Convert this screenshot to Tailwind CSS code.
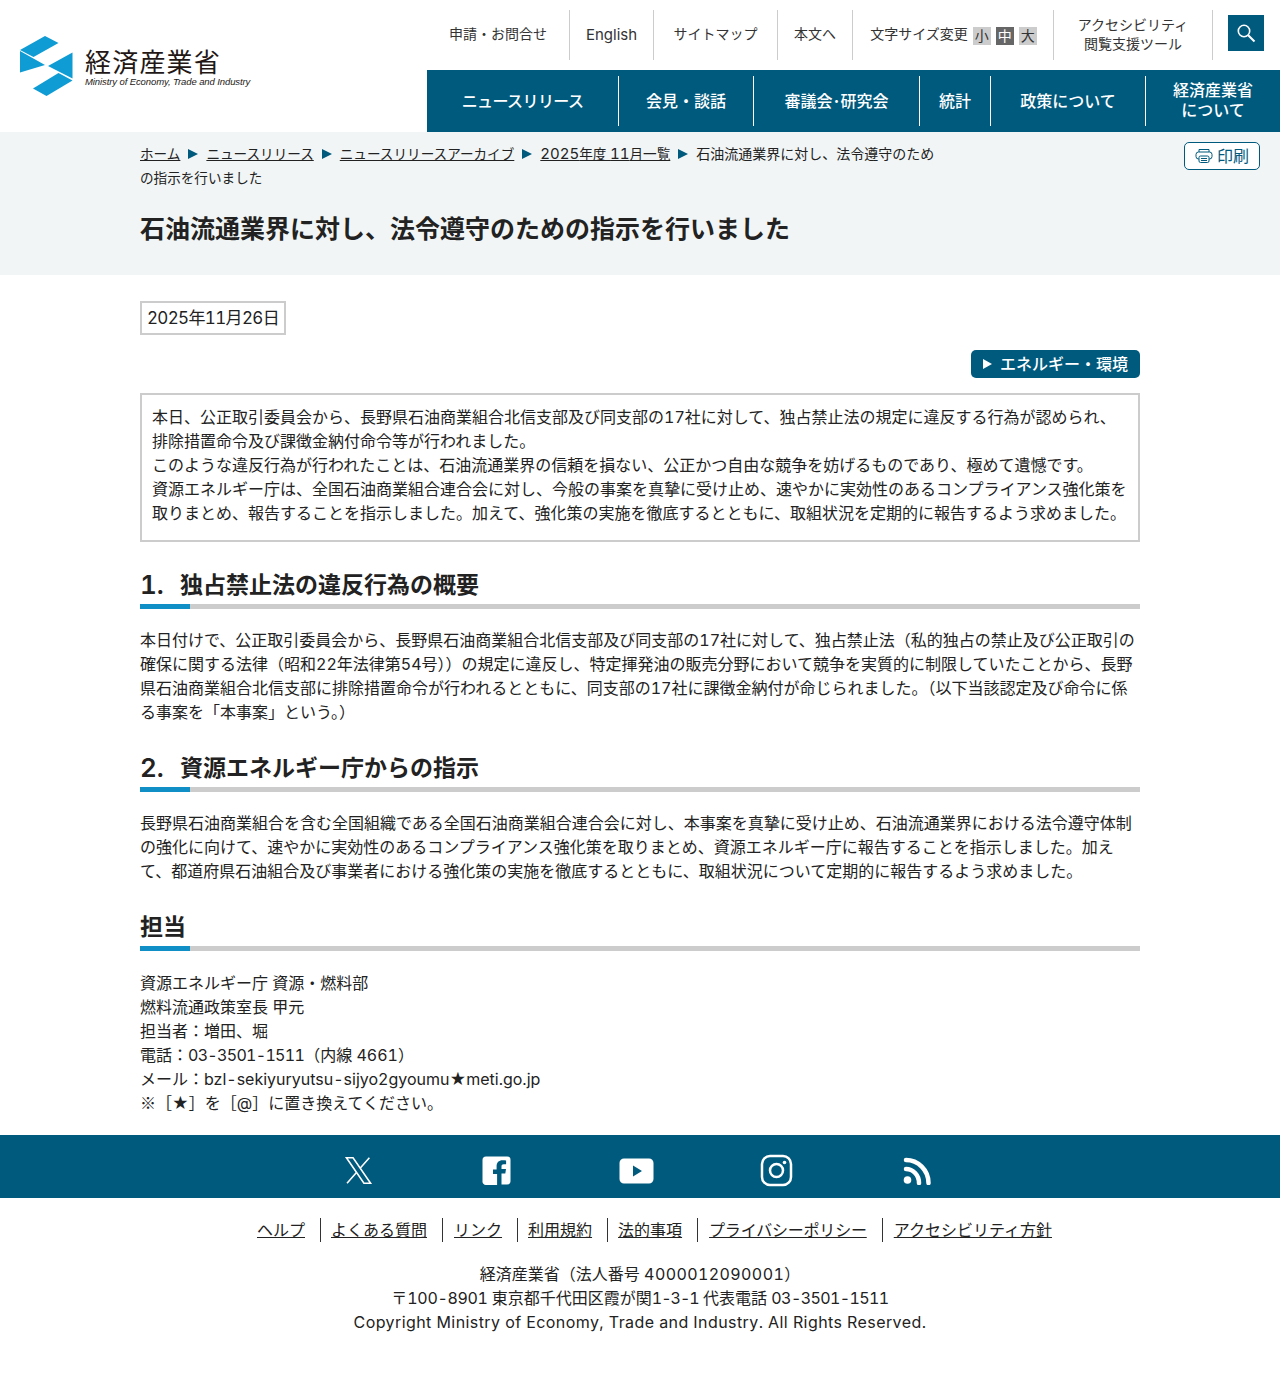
<!DOCTYPE html>
<html lang="ja">
<head>
  <meta charset="UTF-8" />
  <meta name="viewport" content="width=device-width, initial-scale=1.0" />
  <title>石油流通業界に対し、法令遵守のための指示を行いました</title>
  <script src="https://cdn.jsdelivr.net/npm/@tailwindcss/browser@4"></script>
</head>
<body class="bg-white text-[#222] font-['Inter','Noto_Sans_CJK_JP',sans-serif] tabular-nums text-base leading-6 min-h-[1374px]">

  <!-- Header -->
  <header class="flex h-[132px]">
    <a href="#" class="w-[427px] shrink-0 pl-5 pt-9 flex items-start gap-3">
      <svg class="w-[53px] h-[60px] shrink-0" viewBox="0 0 53 60" fill="#0f9bd3">
        <polygon points="25,0 38.500,7 13.500,21 0,14"/>
        <polygon points="0,15 25,29 0,36.500"/>
        <polygon points="52.500,16.500 28,30 52.500,42.500"/>
        <polygon points="38.500,37 52.500,44.500 26.500,60 13,52.500"/>
      </svg>
      <div class="pt-[13px]">
        <div class="text-[26px] leading-[28px] tracking-[1.2px] text-[#231815]">経済産業省</div>
        <div class="text-[9.5px] leading-[10px] italic font-['Liberation_Sans'] text-[#231815] tracking-[-0.1px] whitespace-nowrap">Ministry of Economy, Trade and Industry</div>
      </div>
    </a>
    <div class="flex-1 flex flex-col">
      <div class="h-[70px] flex items-start pt-[10px] text-sm text-[#333]">
        <a href="#" class="w-[143px] h-[50px] flex items-center justify-center border-r border-[#ccc] pb-[2px]">申請・お問合せ</a>
        <a href="#" class="w-[84px] h-[50px] flex items-center justify-center border-r border-[#ccc] text-[15px] pb-[1px]">English</a>
        <a href="#" class="w-[124px] h-[50px] flex items-center justify-center border-r border-[#ccc] pb-[2px]">サイトマップ</a>
        <a href="#" class="w-[75px] h-[50px] flex items-center justify-center border-r border-[#ccc] pb-[2px]">本文へ</a>
        <div class="w-[201px] h-[50px] flex items-center justify-center gap-[5px] border-r border-[#ccc] pb-[2px] pl-[1px]">
          <span>文字サイズ変更</span>
          <span class="flex gap-[5px] mt-[4px]">
            <span class="w-[18px] h-[18px] bg-[#ccc] flex items-center justify-center text-sm leading-none">小</span>
            <span class="w-[18px] h-[18px] bg-[#666] text-white flex items-center justify-center text-sm leading-none">中</span>
            <span class="w-[18px] h-[18px] bg-[#ccc] flex items-center justify-center text-sm leading-none">大</span>
          </span>
        </div>
        <a href="#" class="w-[159px] h-[50px] flex items-center justify-center text-center border-r border-[#ccc] leading-[19px] pb-[3px]">アクセシビリティ<br />閲覧支援ツール</a>
        <button class="ml-[15px] mt-[5px] w-9 h-9 bg-[#005a7d] flex items-center justify-center">
          <svg class="w-5 h-5" viewBox="0 0 20 20" fill="none" stroke="#fff" stroke-width="1.6"><circle cx="8" cy="8" r="5.700"/><path d="M12.200 12.200 18.500 18.500" stroke-width="2"/></svg>
        </button>
      </div>
      <nav class="h-[62px] bg-[#005a7d] flex items-center text-white font-medium text-center">
        <a href="#" class="w-[192px] h-[50px] flex items-center justify-center border-r border-white tracking-[-0.6px]">ニュースリリース</a>
        <a href="#" class="w-[135px] h-[50px] flex items-center justify-center border-r border-white">会見・談話</a>
        <a href="#" class="w-[166px] h-[50px] flex items-center justify-center border-r border-white">審議会･研究会</a>
        <a href="#" class="w-[71px] h-[50px] flex items-center justify-center border-r border-white">統計</a>
        <a href="#" class="w-[155px] h-[50px] flex items-center justify-center border-r border-white">政策について</a>
        <a href="#" class="flex-1 h-[50px] flex items-center justify-center leading-[20px] pb-[3px]">経済産業省<br />について</a>
      </nav>
    </div>
  </header>

  <!-- Breadcrumb + title -->
  <section class="bg-[#f1f5f5] h-[143px] relative">
    <div class="w-[1000px] mx-auto pt-[10px]">
      <div class="flex items-center h-6 text-[13.6px] whitespace-nowrap">
        <a href="#" class="underline">ホーム</a>
        <span class="mx-2 w-0 h-0 border-y-[5px] border-y-transparent border-l-[10px] border-l-[#005a7d]"></span>
        <a href="#" class="underline">ニュースリリース</a>
        <span class="mx-2 w-0 h-0 border-y-[5px] border-y-transparent border-l-[10px] border-l-[#005a7d]"></span>
        <a href="#" class="underline">ニュースリリースアーカイブ</a>
        <span class="mx-2 w-0 h-0 border-y-[5px] border-y-transparent border-l-[10px] border-l-[#005a7d]"></span>
        <a href="#" class="underline"><span class="text-[15px]">2025</span>年度 <span class="text-[15px]">11</span>月一覧</a>
        <span class="mx-2 w-0 h-0 border-y-[5px] border-y-transparent border-l-[10px] border-l-[#005a7d]"></span>
        <span class="text-sm">石油流通業界に対し、法令遵守のため</span>
      </div>
      <div class="text-[13.6px] leading-6">の指示を行いました</div>
      <h1 class="mt-[21px] text-[25px] leading-9 font-bold">石油流通業界に対し、法令遵守のための指示を行いました</h1>
    </div>
    <a href="#" class="absolute right-5 top-[10px] w-[76px] h-[28px] bg-white border border-[#005a7d] rounded-[5px] flex items-center justify-center gap-[4px] text-[#005a7d]">
      <svg class="w-[18px] h-[16px]" viewBox="0 0 18 16" fill="none" stroke="#005a7d" stroke-width="1"><path d="M4 4V1.500h10V4"/><rect x="1" y="4" width="16" height="7" rx="2.500"/><rect x="4" y="8" width="10" height="6.500" rx="1.500" fill="#fff"/><path d="M6 10.500h6M6 12.500h6"/></svg>
      <span class="leading-none pb-[1px]">印刷</span>
    </a>
  </section>

  <!-- Main -->
  <main class="w-[1000px] mx-auto">
    <div class="pt-[26px]">
      <span class="inline-block border-2 border-[#ccc] px-[5px] text-[17px] leading-[30px] tracking-[-0.65px]">2025年11月26日</span>
    </div>
    <div class="flex justify-end mt-[15px]">
      <a href="#" class="h-[28px] w-[169px] bg-[#005a7d] text-white rounded-[5px] flex items-center justify-center gap-2 font-medium pb-[1px]">
        <span class="w-0 h-0 border-y-[5px] border-y-transparent border-l-[9px] border-l-white"></span>
        <span>エネルギー・環境</span>
      </a>
    </div>
    <div class="mt-[15px] border-2 border-[#ccc] px-[10px] py-[10px] h-[149px]">
      本日、公正取引委員会から、長野県石油商業組合北信支部及び同支部の17社に対して、独占禁止法の規定に違反する行為が認められ、<br />排除措置命令及び課徴金納付命令等が行われました。<br />このような違反行為が行われたことは、石油流通業界の信頼を損ない、公正かつ自由な競争を妨げるものであり、極めて遺憾です。<br />資源エネルギー庁は、全国石油商業組合連合会に対し、今般の事案を真摯に受け止め、速やかに実効性のあるコンプライアンス強化策を取りまとめ、報告することを指示しました。加えて、強化策の実施を徹底するとともに、取組状況を定期的に報告するよう求めました。
    </div>

    <h2 class="mt-[22px] text-[23px] leading-[42px] font-bold flex border-b-[5px] border-[#ccc] relative h-[45px]">
      <span class="w-10 text-[26px] font-semibold">1.</span><span>独占禁止法の違反行為の概要</span>
      <span class="absolute left-0 -bottom-[5px] w-[50px] h-[5px] bg-[#0f8fc6]"></span>
    </h2>
    <p class="mt-[19px]">本日付けで、公正取引委員会から、長野県石油商業組合北信支部及び同支部の17社に対して、独占禁止法（私的独占の禁止及び公正取引の確保に関する法律（昭和22年法律第54号））の規定に違反し、特定揮発油の販売分野において競争を実質的に制限していたことから、長野県石油商業組合北信支部に排除措置命令が行われるとともに、同支部の17社に課徴金納付が命じられました。（以下当該認定及び命令に係る事案を「本事案」という。）</p>

    <h2 class="mt-[23px] text-[23px] leading-[42px] font-bold flex border-b-[5px] border-[#ccc] relative h-[45px]">
      <span class="w-10 text-[26px] font-semibold">2.</span><span>資源エネルギー庁からの指示</span>
      <span class="absolute left-0 -bottom-[5px] w-[50px] h-[5px] bg-[#0f8fc6]"></span>
    </h2>
    <p class="mt-[19px]">長野県石油商業組合を含む全国組織である全国石油商業組合連合会に対し、本事案を真摯に受け止め、石油流通業界における法令遵守体制の強化に向けて、速やかに実効性のあるコンプライアンス強化策を取りまとめ、資源エネルギー庁に報告することを指示しました。加えて、都道府県石油組合及び事業者における強化策の実施を徹底するとともに、取組状況について定期的に報告するよう求めました。</p>

    <h2 class="mt-[23px] text-[23px] leading-[42px] font-bold border-b-[5px] border-[#ccc] relative h-[45px]">
      担当
      <span class="absolute left-0 -bottom-[5px] w-[50px] h-[5px] bg-[#0f8fc6]"></span>
    </h2>
    <p class="mt-5">資源エネルギー庁 資源・燃料部<br />燃料流通政策室長 甲元<br />担当者：増田、堀<br />電話：<span class="tracking-[-0.7px]">03-3501-1511</span>（内線 4661）<br />メール：bzl-sekiyuryutsu-sijyo2gyoumu★meti.go.jp<br /><span class="font-['Noto_Sans_CJK_JP'] leading-none">※</span>［★］を［@］に置き換えてください。</p>
  </main>

  <!-- Footer -->
  <footer class="mt-5">
    <div class="h-[63px] bg-[#005a7d] relative">
      <svg class="absolute left-[344px] top-[21px] w-[29px] h-[29px]" viewBox="0 0 24 24" fill="none" stroke="#fff" stroke-width="1.300"><path d="M2 1.500h5.500L22 22.500h-5.500z"/><path d="M21 1.500 13.500 10M10.500 13.500 2.500 22.500"/></svg>
      <svg class="absolute left-[482px] top-[21px] w-[29px] h-[29px]" viewBox="0 0 29 29"><path fill="#fff" d="M4 .5h21a3.500 3.500 0 0 1 3.500 3.500v21a3.500 3.500 0 0 1-3.500 3.500h-5.500v-11h3.800l.7-4.500h-4.500v-2.500c0-1.500.7-2.300 2.300-2.300h2.300V4.500c-1-.2-2.400-.3-3.600-.3-3.700 0-5.900 2.200-5.900 6.100v3.200H11v4.500h4.100v11H4A3.500 3.500 0 0 1 .5 25V4A3.500 3.500 0 0 1 4 .5z"/></svg>
      <svg class="absolute left-[619px] top-[23px] w-[35px] h-[26px]" viewBox="0 0 35 26"><path fill="#fff" fill-rule="evenodd" d="M5 .5h25a4.500 4.500 0 0 1 4.500 4.500v16a4.500 4.500 0 0 1-4.500 4.500H5A4.500 4.500 0 0 1 .5 21V5A4.500 4.500 0 0 1 5 .5zM14 7.500v11l9-5.500z"/></svg>
      <svg class="absolute left-[760px] top-[19px] w-[33px] h-[33px]" viewBox="0 0 33 33" fill="none" stroke="#fff" stroke-width="2.500"><rect x="2" y="2" width="29" height="29" rx="8"/><circle cx="16.500" cy="16.500" r="6.500"/><circle cx="24.500" cy="8.500" r="1.800" fill="#fff" stroke="none"/></svg>
      <svg class="absolute left-[903px] top-[22px] w-[28px] h-[28px]" viewBox="0 0 28 28" fill="none" stroke="#fff" stroke-width="4.500" stroke-linecap="round"><circle cx="4.500" cy="23" r="3.800" fill="#fff" stroke="none"/><path d="M3 12c7 0 13 6 13 14"/><path d="M3 3c12 0 22.500 10 22.500 23"/></svg>
    </div>
    <ul class="flex justify-center mt-5 pl-[14px]">
      <li class="px-[15px] border-r border-[#333] h-6 flex items-center"><a href="#" class="underline">ヘルプ</a></li>
      <li class="pl-[10px] pr-[15px] border-r border-[#333] h-6 flex items-center"><a href="#" class="underline">よくある質問</a></li>
      <li class="pl-[11px] pr-[15px] border-r border-[#333] h-6 flex items-center"><a href="#" class="underline">リンク</a></li>
      <li class="pl-[10px] pr-[15px] border-r border-[#333] h-6 flex items-center"><a href="#" class="underline">利用規約</a></li>
      <li class="pl-[10px] pr-[15px] border-r border-[#333] h-6 flex items-center"><a href="#" class="underline">法的事項</a></li>
      <li class="pl-[11px] pr-[15px] border-r border-[#333] h-6 flex items-center"><a href="#" class="underline tracking-[-0.2px]">プライバシーポリシー</a></li>
      <li class="pl-[11px] h-6 flex items-center"><a href="#" class="underline">アクセシビリティ方針</a></li>
    </ul>
    <address class="not-italic text-center mt-5">
      経済産業省（法人番号 <span class="tracking-[0.4px]">4000012090001</span>）<br />〒<span class="tracking-[-0.35px]">100-8901</span> 東京都千代田区霞が関<span class="tracking-[-1px]">1-3-1</span> 代表電話 <span class="tracking-[-0.6px]">03-3501-1511</span><br /><span class="tracking-[0.42px]">Copyright Ministry of Economy, Trade and Industry. All Rights Reserved.</span>
    </address>
  </footer>

</body>
</html>
